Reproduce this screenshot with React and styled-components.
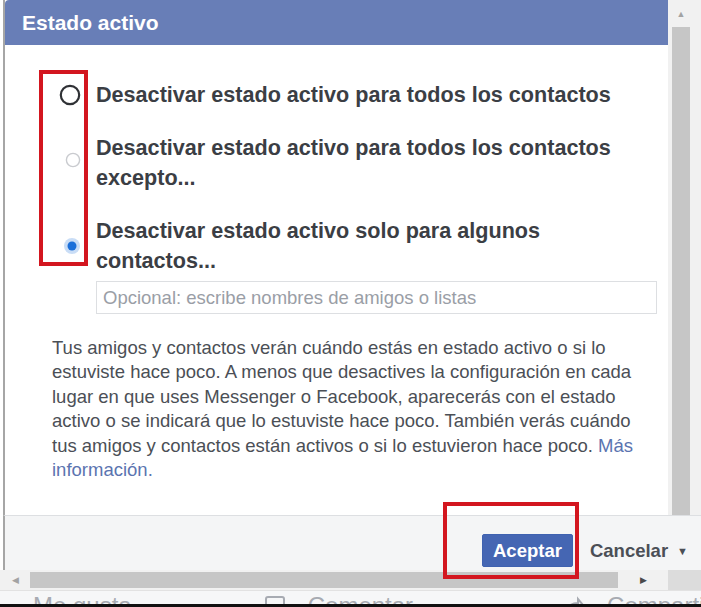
import React from "react";
import styled, { createGlobalStyle } from "styled-components";

const GlobalStyle = createGlobalStyle`
  html, body {
    margin: 0;
    padding: 0;
    background: #ffffff;
  }
  body {
    font-family: "Liberation Sans", Arial, sans-serif;
  }
`;

const Screen = styled.div`
  position: relative;
  width: 701px;
  height: 607px;
  overflow: hidden;
  display: flex;
  flex-direction: column;
  background: #ffffff;
`;

const Main = styled.div`
  display: flex;
  height: 515px;
`;

const Dialog = styled.div`
  flex: 1;
  display: flex;
  flex-direction: column;
  margin-left: 3px;
  border-left: 2px solid #a6a6a6;
`;

const Header = styled.div`
  height: 45px;
  display: flex;
  align-items: center;
  padding-left: 17px;
  background: #687eb7;
  border-top-left-radius: 4px;
  color: #ffffff;
  font-size: 21px;
  font-weight: 700;
`;

const Body = styled.div`
  flex: 1;
  display: flex;
  flex-direction: column;
  padding: 35px 11px 0 47px;
  background: #ffffff;
`;

const OptionList = styled.div`
  display: flex;
  flex-direction: column;
  gap: 23px;
`;

const Option = styled.label`
  display: flex;
  align-items: center;
`;

const RadioSlot = styled.span`
  width: 36px;
  display: flex;
  justify-content: center;
  padding-left: ${({ $shift }) => $shift || 0}px;
  margin-top: ${({ $lift }) => ($lift ? -$lift : 0)}px;
  box-sizing: border-box;
`;

const OptionText = styled.span`
  margin-left: 8px;
  max-width: 545px;
  font-size: 21.6px;
  line-height: 30px;
  font-weight: 700;
  color: #3b3e44;
`;

const NamesInput = styled.input`
  margin: 5px 0 0 44px;
  height: 33px;
  box-sizing: border-box;
  border: 1px solid #dddfe2;
  padding: 0 6px;
  font-family: inherit;
  font-size: 18.5px;
  color: #1d2129;
  outline: none;

  &::placeholder {
    color: #9a9ea6;
  }
`;

const Info = styled.p`
  margin: 22px 0 0;
  max-width: 592px;
  font-size: 18.5px;
  line-height: 24.4px;
  color: #4b4f56;
`;

const Link = styled.a`
  color: #5b74b0;
  text-decoration: none;
`;

const VScroll = styled.div`
  width: 33px;
  display: flex;
  flex-direction: column;
  padding-left: 4px;
  box-sizing: border-box;
  background: #f1f1f1;
`;

const Arrow = styled.div`
  height: ${({ $h }) => $h || 27}px;
  width: ${({ $w }) => $w || 18}px;
  display: flex;
  align-items: center;
  justify-content: center;
  color: ${({ $dark }) => ($dark ? "#4a4a4a" : "#a3a3a3")};
  font-size: 9px;
`;

const VThumb = styled.div`
  flex: 1;
  width: 18px;
  background: #c6c6c6;
`;

const Footer = styled.div`
  height: 55px;
  box-sizing: border-box;
  margin-left: 3px;
  border-left: 2px solid #a6a6a6;
  border-top: 1px solid #dddfe2;
  background: #f4f5f6;
  display: flex;
  justify-content: flex-end;
  align-items: flex-start;
  gap: 17px;
  padding: 18px 13px 0 0;
`;

const PrimaryButton = styled.button`
  width: 91px;
  height: 33px;
  border: 1px solid #3f62b0;
  border-radius: 2px;
  background: #4566b3;
  color: #ffffff;
  font-family: inherit;
  font-size: 18.5px;
  font-weight: 700;
  padding: 0;
`;

const TextButton = styled.span`
  height: 33px;
  display: flex;
  align-items: center;
  gap: 9px;
  font-size: 18.5px;
  font-weight: 700;
  color: #4b4f56;
`;

const Caret = styled.span`
  font-size: 11px;
  color: #4b4f56;
`;

const HScroll = styled.div`
  height: 20px;
  display: flex;
  align-items: center;
  background: #f1f1f1;
`;

const HThumb = styled.div`
  width: 588px;
  height: 16px;
  background: #c6c6c6;
`;

const HTrack = styled.div`
  flex: 1;
  display: flex;
  justify-content: center;
`;

const Corner = styled.div`
  width: 33px;
  height: 20px;
  background: #dcdcdc;
`;

const Strip = styled.div`
  height: 14px;
  overflow: hidden;
  display: flex;
  align-items: flex-start;
  background: #f6f7f8;
  border-top: 1px solid #e2e2e2;
  box-sizing: border-box;
`;

const StripItem = styled.span`
  display: flex;
  align-items: flex-start;
  flex-shrink: 0;
  gap: 22px;
  margin-left: ${({ $at }) => $at}px;
  padding-top: 3px;
  white-space: nowrap;
  font-size: 24px;
  line-height: 24px;
  color: #a7abb2;
`;

const Baseline = styled.div`
  height: 3px;
  background: #111111;
`;

const Mark = styled.div`
  position: absolute;
  left: ${({ $x }) => $x}px;
  top: ${({ $y }) => $y}px;
  width: ${({ $w }) => $w}px;
  height: ${({ $h }) => $h}px;
  box-sizing: border-box;
  border: 4px solid #d3161f;
  pointer-events: none;
`;

function Radio({ state }) {
  if (state === "checked") {
    return (
      <svg width="20" height="20" viewBox="0 0 20 20">
        <circle cx="10" cy="10" r="8" fill="#c9ddf6" />
        <circle cx="10" cy="10" r="4.5" fill="#1b6fd9" />
      </svg>
    );
  }
  if (state === "focus") {
    return (
      <svg width="22" height="22" viewBox="0 0 22 22">
        <circle cx="11" cy="11" r="9.2" fill="none" stroke="#2f3135" strokeWidth="2.2" />
      </svg>
    );
  }
  return (
    <svg width="16" height="16" viewBox="0 0 16 16">
      <circle cx="8" cy="8" r="6.6" fill="#fff" stroke="#c9cbcf" strokeWidth="1.4" />
    </svg>
  );
}

const options = [
  { id: "all", text: "Desactivar estado activo para todos los contactos", state: "focus", shift: 0, lift: 0 },
  { id: "except", text: "Desactivar estado activo para todos los contactos excepto...", state: "off", shift: 6, lift: 6 },
  { id: "some", text: "Desactivar estado activo solo para algunos contactos...", state: "checked", shift: 4, lift: 0 },
];

export default function App() {
  return (
    <>
      <GlobalStyle />
      <Screen>
        <Main>
          <Dialog>
            <Header>Estado activo</Header>
            <Body>
              <OptionList>
                {options.map((o) => (
                  <Option key={o.id}>
                    <RadioSlot $shift={o.shift} $lift={o.lift}>
                      <Radio state={o.state} />
                    </RadioSlot>
                    <OptionText>{o.text}</OptionText>
                  </Option>
                ))}
              </OptionList>
              <NamesInput placeholder="Opcional: escribe nombres de amigos o listas" />
              <Info>
                Tus amigos y contactos verán cuándo estás en estado activo o si lo
                estuviste hace poco. A menos que desactives la configuración en cada
                lugar en que uses Messenger o Facebook, aparecerás con el estado
                activo o se indicará que lo estuviste hace poco. También verás cuándo
                tus amigos y contactos están activos o si lo estuvieron hace poco.{" "}
                <Link href="#">Más información.</Link>
              </Info>
            </Body>
          </Dialog>
          <VScroll>
            <Arrow>▲</Arrow>
            <VThumb />
          </VScroll>
        </Main>
        <Footer>
          <PrimaryButton>Aceptar</PrimaryButton>
          <TextButton>
            Cancelar
            <Caret>▼</Caret>
          </TextButton>
        </Footer>
        <HScroll>
          <Arrow $w={30} $h={20}>◀</Arrow>
          <HThumb />
          <HTrack>
            <Arrow $dark $h={20}>▶</Arrow>
          </HTrack>
          <Corner />
        </HScroll>
        <Strip>
          <StripItem $at={33}>Me gusta</StripItem>
          <StripItem $at={132}>
            <svg width="22" height="22" viewBox="0 0 22 22">
              <rect x="2" y="3" width="18" height="16" rx="2" fill="none" stroke="#a7abb2" strokeWidth="2" />
            </svg>
            Comentar
          </StripItem>
          <StripItem $at={150}>
            <svg width="22" height="22" viewBox="0 0 22 22">
              <path d="M3 18c2-7 7-9 12-9V5l5 6-5 6v-4c-5 0-9 1-12 5z" fill="none" stroke="#a7abb2" strokeWidth="2" />
            </svg>
            Compartir
          </StripItem>
        </Strip>
        <Baseline />
        <Mark $x={39} $y={70} $w={49} $h={196} />
        <Mark $x={443} $y={502} $w={136} $h={77} />
      </Screen>
    </>
  );
}
